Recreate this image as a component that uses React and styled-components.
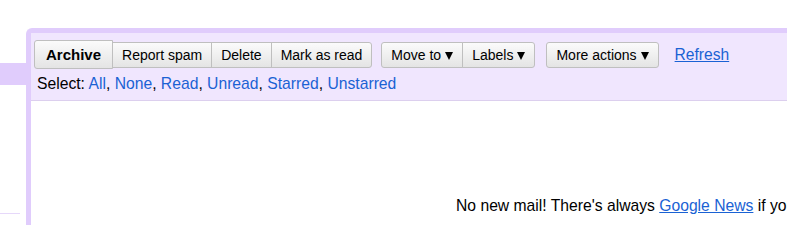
import React from "react";
import styled, { createGlobalStyle } from "styled-components";

const GlobalStyle = createGlobalStyle`
  html, body {
    margin: 0;
    padding: 0;
    background: #fff;
    overflow: hidden;
  }
  body {
    font-family: "Liberation Sans", Arial, sans-serif;
    font-size: 14px;
    color: #000;
  }
`;

const Page = styled.div`
  display: flex;
  height: 225px;
  width: 1200px;
`;

const Side = styled.div`
  width: 26px;
  flex-shrink: 0;
  display: flex;
  flex-direction: column;
`;

const SideTab = styled.div`
  margin-top: 63px;
  height: 22px;
  background: #e0ccfc;
`;

const SideLine = styled.div`
  margin-top: auto;
  margin-bottom: 11px;
  width: 20px;
  height: 1px;
  background: #e6d8fa;
`;

const Frame = styled.div`
  margin-top: 28px;
  flex: 1;
  border-top: 5px solid #e0ccfc;
  border-left: 5px solid #e0ccfc;
  border-top-left-radius: 6px;
  display: flex;
  flex-direction: column;
`;

const Toolbar = styled.div`
  background: #f0e6fe;
  border-bottom: 1px solid #dccfee;
  padding: 7px 0 0 3px;
  height: 60px;
`;

const ButtonRow = styled.div`
  display: flex;
  align-items: center;
  height: 29px;
`;

const Group = styled.div`
  display: flex;
  align-items: center;
  margin-right: ${({ $gap }) => $gap}px;
`;

const Button = styled.button`
  font-family: inherit;
  font-size: ${({ $strong }) => ($strong ? 15 : 14)}px;
  font-weight: ${({ $strong }) => ($strong ? 700 : 400)};
  color: #000;
  height: ${({ $strong }) => ($strong ? 29 : 26)}px;
  padding: 0 ${({ $strong }) => ($strong ? 11 : 9)}px;
  border: 1px solid #bfbfbf;
  margin-left: -1px;
  background: linear-gradient(#fbfbfb, #e4e4e4);
  border-radius: 0;
  display: flex;
  align-items: center;
  gap: 4px;
  cursor: pointer;
  position: relative;
  z-index: ${({ $strong }) => ($strong ? 1 : 0)};

  &:first-child {
    margin-left: 0;
    border-top-left-radius: 3px;
    border-bottom-left-radius: 3px;
  }
  &:last-child {
    border-top-right-radius: 3px;
    border-bottom-right-radius: 3px;
  }
`;

const Caret = styled.span`
  display: inline-block;
  width: 0;
  height: 0;
  margin-top: 3px;
  border-left: 4px solid transparent;
  border-right: 4px solid transparent;
  border-top: 8px solid #000;
`;

const Link = styled.a`
  color: #1a62d4;
  text-decoration: ${({ $underline }) => ($underline ? "underline" : "none")};
  cursor: pointer;
`;

const RefreshLink = styled(Link)`
  font-size: 15.6px;
  margin-left: 5px;
`;

const SelectRow = styled.div`
  margin-top: 4px;
  padding-left: 3px;
  font-size: 15.7px;
  line-height: 21px;
`;

const Body = styled.div`
  flex: 1;
  background: #fff;
`;

const Message = styled.p`
  margin: 96px 0 0;
  padding-left: 425px;
  font-size: 15.7px;
  white-space: nowrap;
`;

const selectors = ["All", "None", "Read", "Unread", "Starred", "Unstarred"];

export default function App() {
  return (
    <>
      <GlobalStyle />
      <Page>
        <Side>
          <SideTab />
          <SideLine />
        </Side>
        <Frame>
          <Toolbar>
            <ButtonRow>
              <Group $gap={9}>
                <Button $strong>Archive</Button>
                <Button>Report spam</Button>
                <Button>Delete</Button>
                <Button>Mark as read</Button>
              </Group>
              <Group $gap={11}>
                <Button>
                  Move to <Caret />
                </Button>
                <Button>
                  Labels <Caret />
                </Button>
              </Group>
              <Group $gap={11}>
                <Button>
                  More actions <Caret />
                </Button>
              </Group>
              <RefreshLink $underline>Refresh</RefreshLink>
            </ButtonRow>
            <SelectRow>
              Select:{" "}
              {selectors.map((s, i) => (
                <React.Fragment key={s}>
                  <Link>{s}</Link>
                  {i < selectors.length - 1 ? ", " : ""}
                </React.Fragment>
              ))}
            </SelectRow>
          </Toolbar>
          <Body>
            <Message>
              No new mail! There's always <Link $underline>Google News</Link> if
              you're bored.
            </Message>
          </Body>
        </Frame>
      </Page>
    </>
  );
}
